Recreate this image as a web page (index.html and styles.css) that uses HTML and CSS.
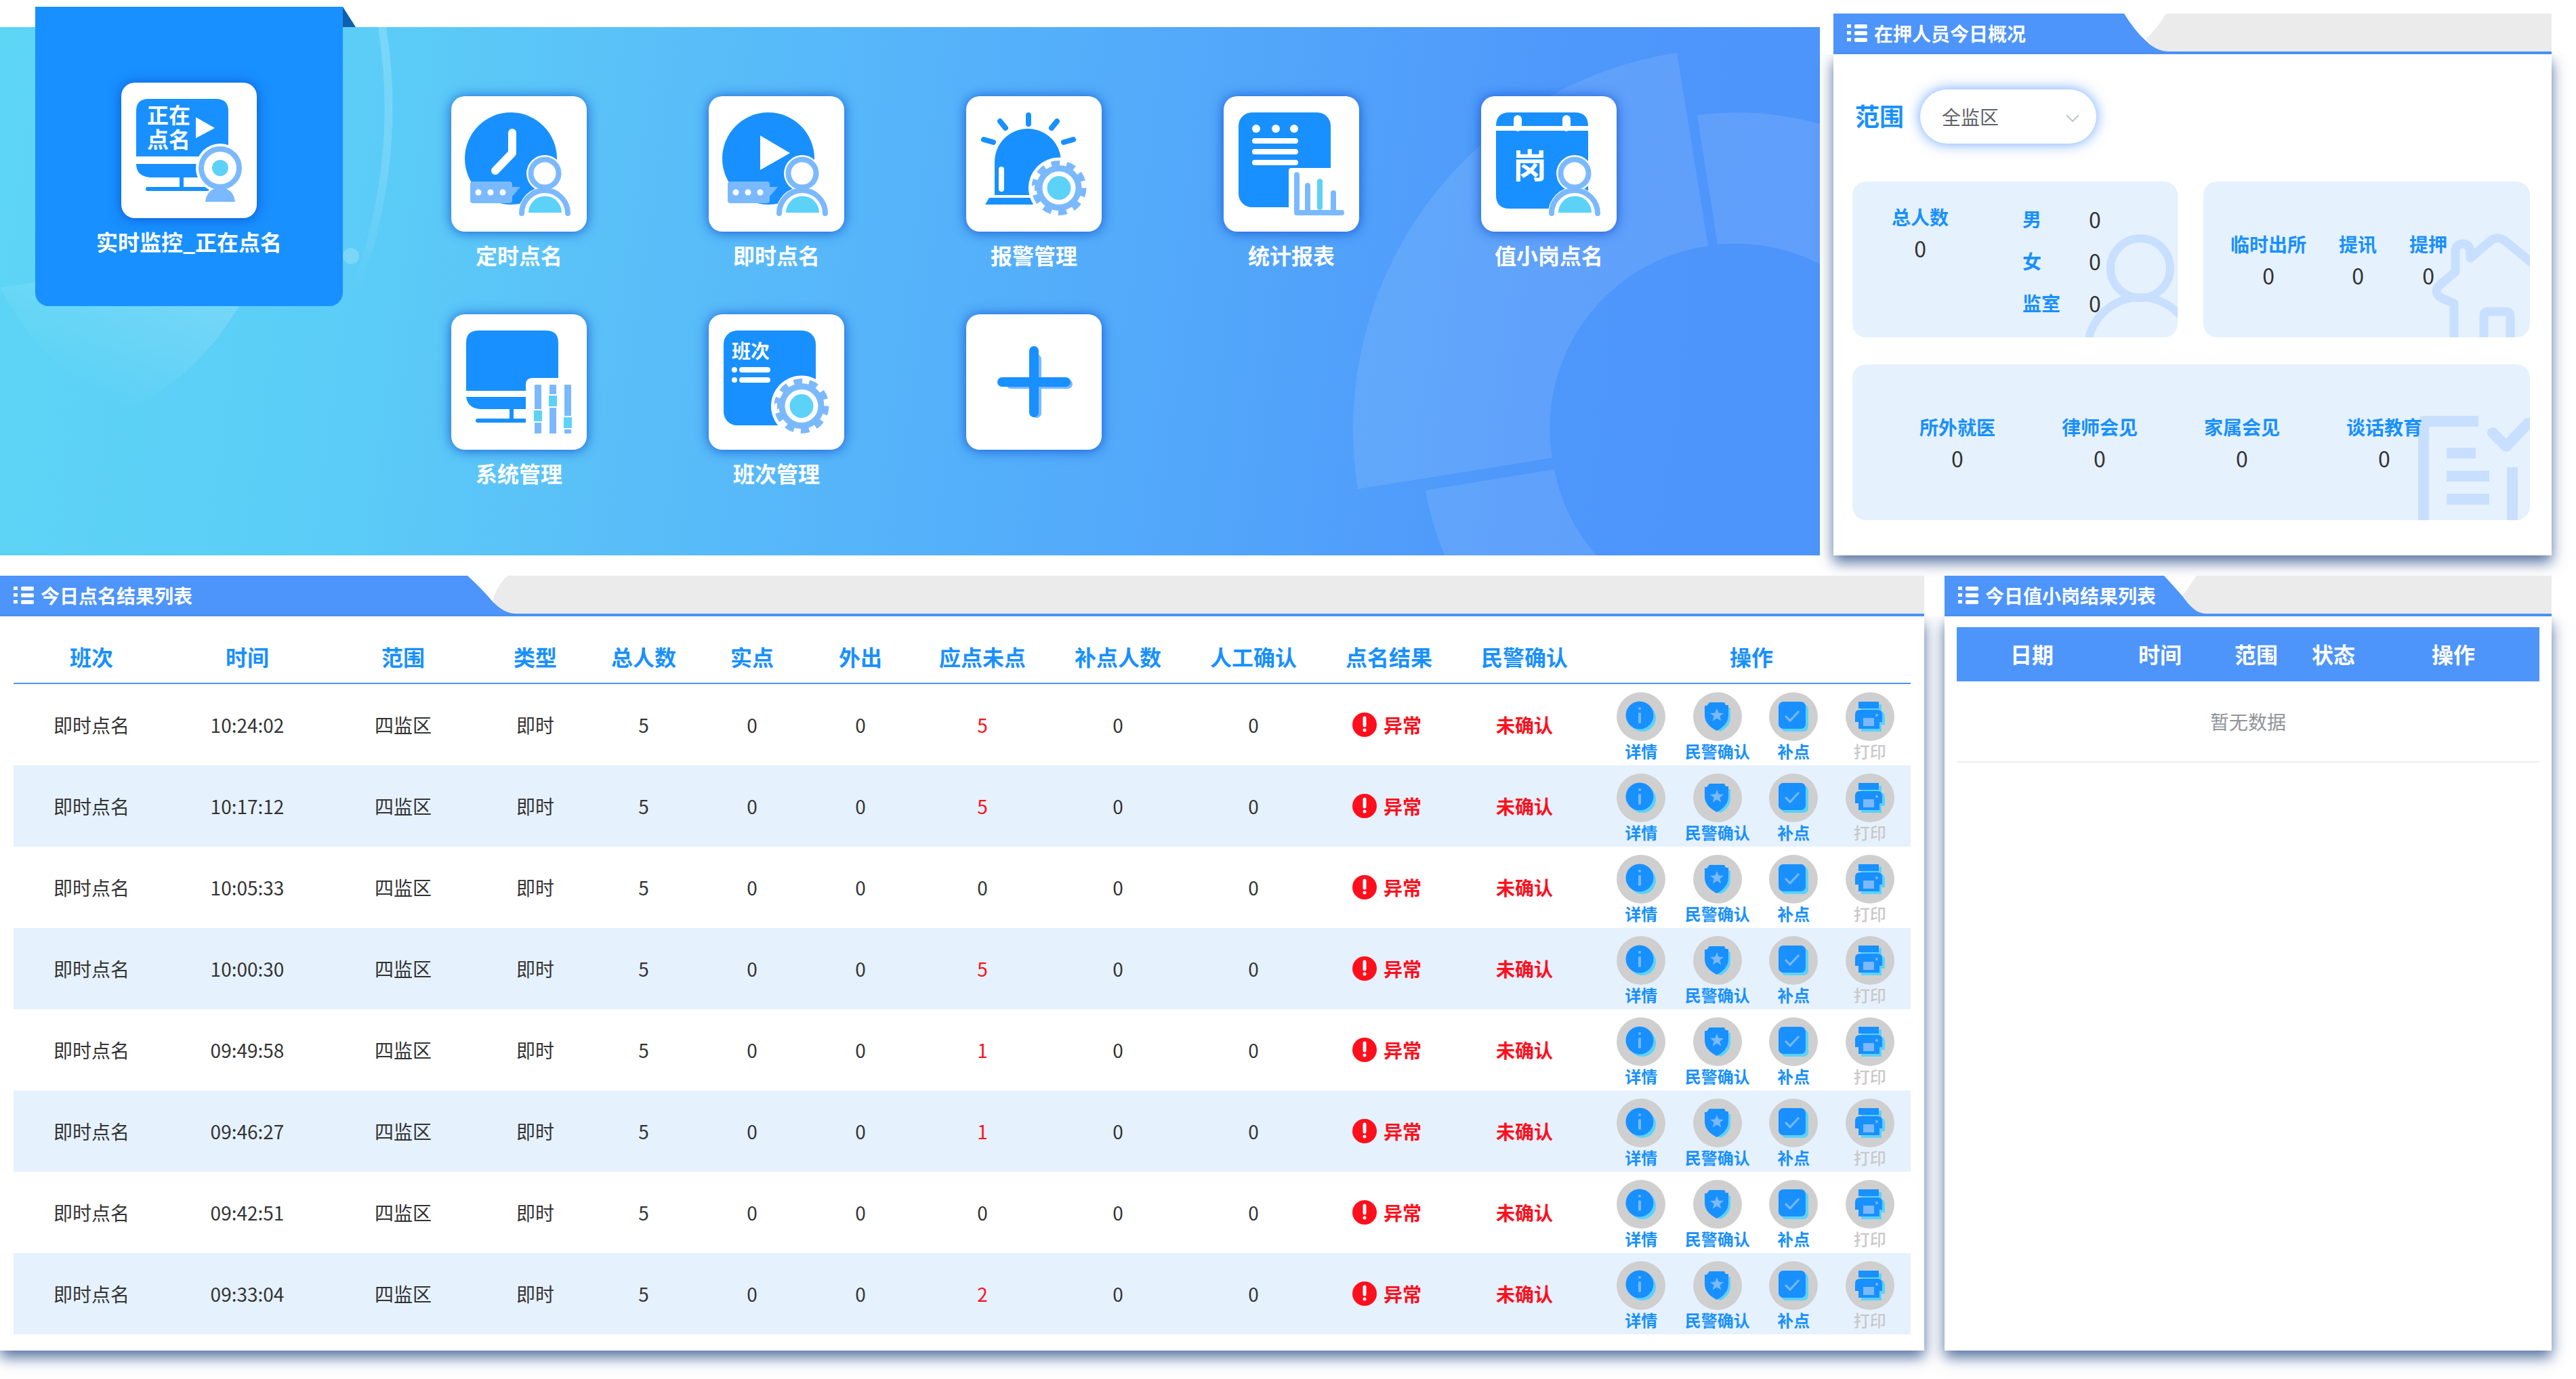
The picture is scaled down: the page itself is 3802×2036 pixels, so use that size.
FILE: index.html
```html
<!DOCTYPE html>
<html lang="zh-CN">
<head>
<meta charset="utf-8">
<title>点名管理</title>
<link rel="stylesheet" href="styles.css">
</head>
<body>
<svg class="sprite" aria-hidden="true">
  <symbol id="i-list" viewBox="0 0 30 26">
    <path fill="#fff" d="M0 0h6v5H0zM0 10h6v5H0zM0 20h6v5H0z"/>
    <rect x="11" width="19" height="6" rx="2" fill="#fff"/><rect x="11" y="10" width="19" height="6" rx="2" fill="#fff"/><rect x="11" y="20" width="19" height="6" rx="2" fill="#fff"/>
  </symbol>
  <symbol id="person" viewBox="0 0 200 200">
    <circle cx="138" cy="114" r="27" fill="#fff"/>
    <path d="M99 173a39 39 0 0 1 78 0v6H99z" fill="#fff"/>
    <circle cx="138" cy="114" r="20.500" fill="none" stroke="#7bb9ff" stroke-width="8"/>
    <path d="M104 173a34 34 0 0 1 68 0" fill="none" stroke="#7bb9ff" stroke-width="8" stroke-linecap="round"/>
    <path d="M114 172a24.500 24.500 0 0 1 49 0z" fill="#5cd2f8"/>
  </symbol>
  <symbol id="bubble" viewBox="0 0 200 200">
    <path d="M32 126h54q4 0 4 4v4h12l-12 14v6q0 4-4 4H32q-4 0-4-4v-24q0-4 4-4z" fill="#7bb9ff"/>
    <g fill="#fff"><circle cx="40" cy="142" r="4.500"/><circle cx="58" cy="142" r="4.500"/><circle cx="76" cy="142" r="4.500"/></g>
  </symbol>
  <symbol id="gear" viewBox="0 0 200 200">
    <circle cx="137" cy="135.500" r="45" fill="#fff"/>
    <circle cx="137" cy="135.500" r="29" fill="none" stroke="#7bb9ff" stroke-width="9"/>
    <circle cx="137" cy="135.500" r="36" fill="none" stroke="#7bb9ff" stroke-width="9" pathLength="20" stroke-dasharray="1.100 0.900"/>
    <circle cx="137" cy="135.500" r="17.500" fill="#5cd2f8"/>
  </symbol>
  <symbol id="i-info" viewBox="0 0 72 72">
    <circle cx="36" cy="36" r="36" fill="#cfcfcf"/><circle cx="38" cy="38" r="20" fill="#5cd2f8"/><circle cx="34" cy="34" r="20.500" fill="#1890ff"/>
    <circle cx="34" cy="24" r="2" fill="#7bb9ff"/><path d="M34 32v12" stroke="#7bb9ff" stroke-width="4" stroke-linecap="round"/>
  </symbol>
  <symbol id="i-shield" viewBox="0 0 72 72">
    <circle cx="36" cy="36" r="36" fill="#cfcfcf"/>
    <path d="M26 19h22l3 4h4v14q0 14-15 21-16-8-16-21z" fill="#5cd2f8"/>
    <path d="M24 15h22l2 4h4v15q0 14-17 23-18-9-18-23V20h3z" fill="#1890ff"/>
    <path d="M35 24l2.600 6.600 7.400.400-5.700 4.600 2 7L35 38.600 28.700 42.600l2-7L25 31l7.400-.400z" fill="#7bb9ff"/>
  </symbol>
  <symbol id="i-check" viewBox="0 0 72 72">
    <circle cx="36" cy="36" r="36" fill="#cfcfcf"/><rect x="18" y="18" width="40" height="40" rx="7" fill="#5cd2f8"/><rect x="14" y="14" width="40" height="40" rx="7" fill="#1890ff"/>
    <path d="M24 35l7 7 13-14" fill="none" stroke="#7bb9ff" stroke-width="3"/>
  </symbol>
  <symbol id="i-print" viewBox="0 0 72 72">
    <circle cx="36" cy="36" r="36" fill="#cfcfcf"/>
    <path d="M23 18h30v10q5 2 5 8v12h-5v10H23z" fill="#5cd2f8"/>
    <path d="M19 14h30v10H19zM21 26h26q7 0 7 7v11h-4v10H19V44h-5V33q0-7 7-7z" fill="#1890ff"/>
    <path d="M26 38h16v12H26z" fill="#7bb9ff"/><circle cx="46" cy="34" r="2" fill="#7bb9ff"/>
  </symbol>
  <symbol id="i-warn" viewBox="0 0 36 36">
    <circle cx="18" cy="18" r="18" fill="#ff0e1c"/><path d="M18 8v11" stroke="#fff" stroke-width="5" stroke-linecap="round"/><circle cx="18" cy="26" r="2.500" fill="#fff"/>
  </symbol>
</svg>

<div class="page">
  <div class="row row-top">
    <nav class="banner">
      <svg class="deco deco-left" viewBox="0 0 620 780" aria-hidden="true">
        <defs>
          <linearGradient id="fade-arc" x1="0" y1="0" x2="0" y2="1"><stop offset="0" stop-color="#fff" stop-opacity=".2"/><stop offset=".5" stop-color="#fff" stop-opacity=".15"/><stop offset="1" stop-color="#fff" stop-opacity="0"/></linearGradient>
          <linearGradient id="fade-fan" x1=".9" y1="0" x2=".3" y2=".9"><stop offset="0" stop-color="#fff" stop-opacity=".24"/><stop offset="1" stop-color="#fff" stop-opacity="0"/></linearGradient>
        </defs>
        <path d="M570 0A757 757 0 0 1 526 398L516 392A745 745 0 0 0 558 0z" fill="url(#fade-arc)"/>
        <circle cx="518" cy="338" r="12" fill="#fff" fill-opacity=".2"/>
        <path d="M0 384Q210 358 400 300Q350 470 218 550Q190 566 170 560Q60 500 0 384z" fill="url(#fade-fan)"/>
      </svg>
      <svg class="deco deco-right" viewBox="0 0 700 780" aria-hidden="true">
        <g fill="#fff" fill-opacity=".1">
          <path d="M489 38A562 562 0 0 0 18 682L305 636A272 272 0 0 1 535 323z"/>
          <path d="M519 130A466 466 0 0 1 700 143V350A272 272 0 0 0 549 321z"/>
          <path d="M118 684A466 466 0 0 0 146 780H370A272 272 0 0 1 308 653z"/>
        </g>
      </svg>

      <a class="app app-current" href="#">
        <span class="tile"><svg viewBox="0 0 200 200">
          <path d="M22 109V42q0-18 18-18h100q18 0 18 18v67zM22 120h136q0 20-20 20H92v14h34q4 0 4 3t-4 3H39q-3 0-3-3t3-3h47v-14H42q-20-2-20-20z" fill="#1890ff"/>
          <text x="38" y="60" class="glyph" font-size="32">正在</text><text x="38" y="96" class="glyph" font-size="32">点名</text>
          <path d="M110 51l28 16-28 15z" fill="#fff"/>
          <circle cx="146" cy="126" r="36" fill="#fff"/>
          <circle cx="146" cy="126" r="28" fill="none" stroke="#7bb9ff" stroke-width="8"/>
          <circle cx="146" cy="126" r="12" fill="#5cd2f8"/>
          <path d="M124 176q2-16 15-20h14q13 4 15 20z" fill="#7bb9ff"/>
        </svg></span>
        <span class="name">实时监控_正在点名</span>
        <span class="fold"></span>
      </a>

      <div class="apps">
        <a class="app" href="#"><span class="tile"><svg viewBox="0 0 200 200"><circle cx="88" cy="92" r="68" fill="#1890ff"/><path d="M90 54v30L65 110" fill="none" stroke="#fff" stroke-width="12" stroke-linecap="round" stroke-linejoin="round"/><use href="#bubble"/><use href="#person"/></svg></span><span class="name">定时点名</span></a>
        <a class="app" href="#"><span class="tile"><svg viewBox="0 0 200 200"><circle cx="88" cy="92" r="68" fill="#1890ff"/><path d="M76 58l44 26-44 25z" fill="#fff"/><use href="#bubble"/><use href="#person"/></svg></span><span class="name">即时点名</span></a>
        <a class="app" href="#"><span class="tile"><svg viewBox="0 0 200 200"><path d="M42 146V97a49 49 0 0 1 98 0v49zM34 150h68v10H28z" fill="#1890ff"/><path d="M92 28v13M50 37l8 10M26 64l14 4M134 37l-8 10M158 64l-14 4" stroke="#1890ff" stroke-width="8" stroke-linecap="round"/><path d="M52 108v29" stroke="#fff" stroke-width="8" stroke-linecap="round"/><use href="#gear"/></svg></span><span class="name">报警管理</span></a>
        <a class="app" href="#"><span class="tile"><svg viewBox="0 0 200 200"><rect x="22" y="24" width="136" height="140" rx="20" fill="#1890ff"/><g fill="#fff"><circle cx="48" cy="48" r="6"/><circle cx="77" cy="48" r="6"/><circle cx="104" cy="48" r="6"/><path d="M100 106h60v60H96v-56q0-4 4-4z"/></g><path d="M46 66h60M46 82h60M46 98h60" stroke="#fff" stroke-width="8" stroke-linecap="round"/><path d="M108 116v56h66M124 132v40M162 143v29" fill="none" stroke="#7bb9ff" stroke-width="8" stroke-linecap="round" stroke-linejoin="round"/><path d="M142 164v-38" stroke="#5cd2f8" stroke-width="8" stroke-linecap="round"/></svg></span><span class="name">统计报表</span></a>
        <a class="app" href="#"><span class="tile"><svg viewBox="0 0 200 200"><path d="M22 44q0-20 20-20h96q20 0 20 20zM22 51h136v95q0 20-20 20H42q-20 0-20-20z" fill="#1890ff"/><path d="M54 34v12M126 34v12" stroke="#fff" stroke-width="12" stroke-linecap="round"/><text x="47" y="121" class="glyph" font-size="50">岗</text><use href="#person"/></svg></span><span class="name">值小岗点名</span></a>
        <a class="app" href="#"><span class="tile"><svg viewBox="0 0 200 200"><path d="M22 113V42q0-18 18-18h100q18 0 18 18v71zM22 122h92v18H92v14h22v6H39q-3 0-3-3t3-3h47v-14H42q-18-2-20-18z" fill="#1890ff"/><path d="M120 94h42v70h-52v-60q0-10 10-10z" fill="#fff"/><path d="M128 104v36M128 160v16M150 104v14M150 138v38M172 104v46M172 170v6" stroke="#7bb9ff" stroke-width="10"/><path d="M128 142v16M150 120v16M172 152v16" stroke="#5cd2f8" stroke-width="12"/></svg></span><span class="name">系统管理</span></a>
        <a class="app" href="#"><span class="tile"><svg viewBox="0 0 200 200"><rect x="22" y="24" width="136" height="140" rx="20" fill="#1890ff"/><text x="34" y="65" class="glyph" font-size="28">班次</text><path d="M49 82h38M49 97h38" stroke="#fff" stroke-width="8" stroke-linecap="round"/><g fill="#fff"><circle cx="38" cy="82" r="4"/><circle cx="38" cy="97" r="4"/></g><use href="#gear"/></svg></span><span class="name">班次管理</span></a>
        <a class="app" href="#" aria-label="添加"><span class="tile"><svg viewBox="0 0 200 200"><path d="M66 103h84M104 66v80" stroke="#7bb9ff" stroke-width="14" stroke-linecap="round"/><path d="M53 100h94M100 54v91" stroke="#1890ff" stroke-width="14" stroke-linecap="round"/></svg></span></a>
      </div>
    </nav>

    <section class="panel overview">
      <header class="head">
        <h2><svg class="list"><use href="#i-list"/></svg>在押人员今日概况</h2>
        <svg class="curve" viewBox="0 0 72 56" aria-hidden="true"><path d="M62 0Q50 20 32 38L50 56H72V0z" fill="#ebebeb"/><path d="M0 0Q16 26 32 40Q48 56 66 56H0z" fill="#4d94fb"/></svg>
        <span class="rest"></span>
      </header>
      <div class="body">
        <div class="filter">
          <label for="range">范围</label>
          <span class="pick">
            <select id="range"><option>全监区</option></select>
            <svg viewBox="0 0 20 11" aria-hidden="true"><path d="M1 1l9 9 9-9" fill="none" stroke="#c0c4cc" stroke-width="2"/></svg>
          </span>
        </div>
        <div class="cards">
          <div class="card card-total">
            <svg class="mark mark-person" viewBox="0 0 136 152"><g fill="none" stroke="#c8dfff" stroke-width="12"><circle cx="81" cy="50" r="44"/><circle cx="81" cy="171" r="78"/></g></svg>
            <dl class="stat"><dt>总人数</dt><dd>0</dd></dl>
            <dl class="split"><dt>男</dt><dd>0</dd><dt>女</dt><dd>0</dd><dt>监室</dt><dd>0</dd></dl>
          </div>
          <div class="card card-out">
            <svg class="mark mark-house" viewBox="0 0 150 160"><path d="M38 160V110L20 102Q6 94 17 83L40 63V32q1-10 11-10t11 12v9L90 19q12-11 25 0l40 33M82 160v-32q0-6 7-6h26q6 0 6 6v32" fill="none" stroke="#c8dfff" stroke-width="13" stroke-linejoin="round"/><circle cx="62" cy="42" r="6" fill="#c8dfff"/></svg>
            <dl class="stat"><dt>临时出所</dt><dd>0</dd></dl>
            <dl class="stat"><dt>提讯</dt><dd>0</dd></dl>
            <dl class="stat"><dt>提押</dt><dd>0</dd></dl>
          </div>
          <div class="card card-wide">
            <svg class="mark mark-doc" viewBox="0 0 168 158"><path d="M92 12H11V158M142 80v78M45 59h43M45 93h63M45 127h63" fill="none" stroke="#c8dfff" stroke-width="16" stroke-linejoin="round"/><path d="M113 29l20 20 32-34" fill="none" stroke="#c8dfff" stroke-width="16" stroke-linecap="round" stroke-linejoin="round"/></svg>
            <dl class="stat"><dt>所外就医</dt><dd>0</dd></dl>
            <dl class="stat"><dt>律师会见</dt><dd>0</dd></dl>
            <dl class="stat"><dt>家属会见</dt><dd>0</dd></dl>
            <dl class="stat"><dt>谈话教育</dt><dd>0</dd></dl>
          </div>
        </div>
      </div>
    </section>
  </div>

  <div class="row row-bottom">
    <section class="panel results">
      <header class="head">
        <h2><svg class="list"><use href="#i-list"/></svg>今日点名结果列表</h2>
        <svg class="curve" viewBox="0 0 72 56" aria-hidden="true"><path d="M60 0Q46 10 37 36L50 56H72V0z" fill="#ebebeb"/><path d="M0 0Q18 16 37 38Q54 56 72 56H0z" fill="#4d94fb"/></svg>
        <span class="rest"></span>
      </header>
      <div class="body">
        <table>
          <colgroup><col class="c230"><col class="c230"><col class="c230"><col class="c160"><col class="c160"><col class="c160"><col class="c160"><col class="c200"><col class="c200"><col class="c200"><col class="c200"><col class="c200"><col></colgroup>
          <thead><tr><th>班次</th><th>时间</th><th>范围</th><th>类型</th><th>总人数</th><th>实点</th><th>外出</th><th>应点未点</th><th>补点人数</th><th>人工确认</th><th>点名结果</th><th>民警确认</th><th>操作</th></tr></thead>
          <tbody id="rows"></tbody>
        </table>
      </div>
    </section>

    <section class="panel duty">
      <header class="head">
        <h2><svg class="list"><use href="#i-list"/></svg>今日值小岗结果列表</h2>
        <svg class="curve" viewBox="0 0 72 56" aria-hidden="true"><path d="M48 0Q38 14 27 30L40 56H72V0z" fill="#ebebeb"/><path d="M0 0Q13 14 27 30Q45 56 61 56H0z" fill="#4d94fb"/></svg>
        <span class="rest"></span>
      </header>
      <div class="body">
        <table>
          <colgroup><col class="d222"><col class="d156"><col class="d128"><col class="d100"><col></colgroup>
          <thead><tr><th>日期</th><th>时间</th><th>范围</th><th>状态</th><th>操作</th></tr></thead>
          <tbody><tr><td colspan="5">暂无数据</td></tr></tbody>
        </table>
      </div>
    </section>
  </div>
</div>
<script src="app.js"></script>
</body>
</html>
```
FILE: app.js
```js
// One entry per roll call: time and number of people missed.
const calls = [
  ["10:24:02", 5],
  ["10:17:12", 5],
  ["10:05:33", 0],
  ["10:00:30", 5],
  ["09:49:58", 1],
  ["09:46:27", 1],
  ["09:42:51", 0],
  ["09:33:04", 2],
];

const action = (icon, text, off) =>
  `<button type="button"${off ? " disabled" : ""}><svg><use href="#${icon}"/></svg>${text}</button>`;

document.getElementById("rows").innerHTML = calls
  .map(
    ([time, missed]) => `<tr>
  <td>即时点名</td><td>${time}</td><td>四监区</td><td>即时</td><td>5</td><td>0</td><td>0</td>
  <td${missed ? ' class="bad"' : ""}>${missed}</td><td>0</td><td>0</td>
  <td><span class="flag flag-icon"><svg><use href="#i-warn"/></svg>异常</span></td>
  <td><span class="flag">未确认</span></td>
  <td class="ops"><div>${action("i-info", "详情")}${action("i-shield", "民警确认")}${action("i-check", "补点")}${action("i-print", "打印", true)}</div></td>
</tr>`
  )
  .join("");
```
FILE: styles.css
```css
* { box-sizing: border-box; }
body {
  margin: 0;
  background: #fff;
  color: #333;
  font-family: "Noto Sans CJK SC", sans-serif;
  font-size: 28px;
}
h2, dl, dd { margin: 0; }
a { text-decoration: none; }
.sprite { position: absolute; width: 0; height: 0; }

.page {
  display: flex;
  flex-direction: column;
  gap: 30px;
  padding: 20px 36px 42px 0;
}
.row { display: grid; }
.row-top { grid-template-columns: 2686fr 1060fr; gap: 20px; }
.row-bottom { grid-template-columns: 2840fr 896fr; gap: 30px; }

/* banner */
.banner {
  position: relative;
  display: flex;
  align-items: flex-start;
  margin-top: 20px;
  padding-left: 52px;
  background: linear-gradient(98deg, #5dd5f5 0%, #5bcdf7 20%, #5ac0f8 34%, #55b3fa 50%, #52a6fa 67%, #4e97fb 84%, #4d94fb 100%);
}
.deco { position: absolute; top: 0; height: 780px; }
.deco-left { left: 0; width: 620px; }
.deco-right { right: 0; width: 700px; }
.app {
  position: relative;
  display: flex;
  flex-direction: column;
  align-items: center;
  gap: 12px;
  padding-top: 102px;
  color: #fff;
}
.app-current {
  width: 454px;
  height: 442px;
  margin-top: -30px;
  padding-top: 112px;
  background: #1890ff;
  border-radius: 0 0 20px 20px;
}
.fold {
  position: absolute;
  left: 100%;
  top: 0;
  width: 19px;
  height: 30px;
  background: #0e60ae;
  clip-path: polygon(0 0, 100% 100%, 0 100%);
}
.tile {
  width: 200px;
  height: 200px;
  border-radius: 20px;
  background: #fff;
  box-shadow: 0 1px 18px rgba(10, 75, 205, .85);
}
.tile svg { display: block; }
.glyph { fill: #fff; font-weight: 700; }
.name { font-size: 32px; line-height: 44px; font-weight: 700; white-space: nowrap; }
.apps {
  flex: 1;
  display: grid;
  grid-template-columns: repeat(5, 1fr);
  grid-auto-rows: 322px;
  margin: 0 210px 0 70px;
}

/* panels */
.panel { display: flex; flex-direction: column; }
.head {
  position: relative;
  display: flex;
  height: 60px;
  border-bottom: 4px solid #4a90f5;
}
.head h2 {
  display: flex;
  align-items: center;
  gap: 10px;
  padding: 2px 0 0 20px;
  background: #4d94fb;
  color: #fff;
  font-size: 28px;
  font-weight: 700;
  white-space: nowrap;
}
.overview h2 { width: 40.5%; }
.results h2 { width: 24.3%; }
.duty h2 { width: 36.2%; }
.list { width: 30px; height: 26px; }
.curve { width: 72px; height: 56px; }
.rest { flex: 1; margin-left: -1px; background: #ebebeb; }
.body {
  flex: 1;
  background: #fff;
  box-shadow: 0 10px 20px rgba(10, 50, 120, .7);
  clip-path: inset(0 -40px -40px -40px);
}

/* overview */
.overview .body { padding: 52px 32px 52px 28px; }
.filter { display: flex; align-items: center; gap: 24px; padding-left: 4px; margin-bottom: 56px; }
.filter label { color: #1890ff; font-size: 36px; font-weight: 700; line-height: 76px; padding-bottom: 4px; }
.pick { position: relative; width: 260px; }
.pick select {
  display: block;
  width: 100%;
  height: 80px;
  padding: 0 60px 0 32px;
  border: 0;
  border-radius: 40px;
  background: #fff;
  color: #606266;
  font: inherit;
  appearance: none;
  box-shadow: 0 0 20px rgba(77, 148, 251, .85);
}
.pick svg { position: absolute; right: 25px; top: 37px; width: 20px; height: 11px; pointer-events: none; }
.cards { display: grid; grid-template-columns: 480fr 482fr; gap: 40px 38px; }
.card {
  position: relative;
  display: flex;
  align-items: center;
  height: 230px;
  border-radius: 20px;
  background: #e6f1fe;
  overflow: hidden;
}
.stat, .split { position: relative; line-height: 46px; }
.stat { text-align: center; }
dt { color: #1890ff; font-weight: 700; white-space: nowrap; }
dd { font-size: 32px; }
.card-total { align-items: flex-start; gap: 109px; padding: 24px 0 0 58px; }
.card-total .stat { padding-top: 5px; }
.split { display: grid; grid-template-columns: 56px auto; column-gap: 42px; line-height: 62px; }
.card-out { gap: 48px; padding-left: 40px; }
.card-wide { grid-column: 1 / -1; padding: 0 110px 0 50px; }
.card-wide .stat { flex: 1; }
.mark { position: absolute; right: 0; bottom: 0; }
.mark-person { width: 136px; height: 152px; }
.mark-house { width: 150px; height: 160px; }
.mark-doc { width: 168px; height: 158px; }

/* tables */
table { width: 100%; border-collapse: separate; border-spacing: 0; table-layout: fixed; }
th { padding: 0; font-size: 32px; font-weight: 700; }
td { padding: 0; text-align: center; }

.results .body { padding: 20px 20px 24px; }
.results th { height: 80px; color: #1890ff; border-bottom: 2px solid #4d94fb; }
.results td { height: 120px; }
.results tr:nth-child(even) td { background: #e6f1fe; }
.c230 { width: 8.2143%; }
.c160 { width: 5.7143%; }
.c200 { width: 7.1429%; }
.bad, .flag { color: #ff0e1c; }
.flag { display: flex; align-items: center; justify-content: center; gap: 10px; font-weight: 700; }
.flag-icon { padding-right: 6px; }
.flag svg { width: 36px; height: 36px; }
.results .ops { padding: 12px 4px 6px 16px; }
.ops div { display: grid; grid-template-columns: repeat(4, 1fr); }
.ops button {
  display: flex;
  flex-direction: column;
  align-items: center;
  padding: 0;
  border: 0;
  background: none;
  color: #1890ff;
  font: inherit;
  font-size: 24px;
  font-weight: 700;
  line-height: 30px;
  white-space: nowrap;
}
.ops button:disabled { color: #c8c8c8; font-weight: 500; }
.ops svg { width: 72px; height: 72px; }

.duty .body { padding: 16px 18px; }
.duty th { height: 80px; padding-bottom: 2px; background: #4d94fb; color: #fff; }
.duty td { height: 120px; color: #909399; border-bottom: 2px solid #ebeef5; }
.d222 { width: 25.814%; }
.d156 { width: 18.1395%; }
.d128 { width: 14.8837%; }
.d100 { width: 11.6279%; }
```
